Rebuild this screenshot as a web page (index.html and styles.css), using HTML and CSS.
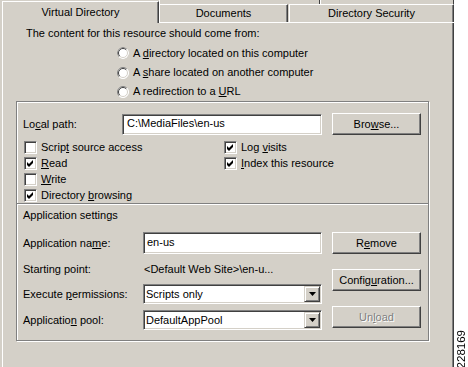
FILE: index.html
```html
<!DOCTYPE html>
<html lang="en">
<head>
    <meta charset="UTF-8">
    <meta name="viewport" content="width=device-width, initial-scale=1.0">
    <title>Virtual Directory Properties</title>
    <link rel="stylesheet" href="styles.css">
</head>
<body>
    <svg class="defs" width="0" height="0">
        <symbol id="radio" viewBox="0 0 12 12">
            <circle cx="6" cy="6" r="5.5" fill="#fff"/>
            <path d="M2.1 9.9 A5.5 5.5 0 0 1 9.9 2.1" fill="none" stroke="#808080"/>
            <path d="M2.8 9.2 A4.5 4.5 0 0 1 9.2 2.8" fill="none" stroke="#404040"/>
            <path d="M9.9 2.1 A5.5 5.5 0 0 1 2.1 9.9" fill="none" stroke="#fff"/>
            <path d="M9.2 2.8 A4.5 4.5 0 0 1 2.8 9.2" fill="none" stroke="#d4d0c8"/>
        </symbol>
        <symbol id="tick" viewBox="0 0 11 11">
            <path d="M2 4 L4 6 L8 2 L8 5 L4 9 L2 7 Z" fill="#000"/>
        </symbol>
        <symbol id="arrow" viewBox="0 0 7 4">
            <path d="M0 0 H7 L3.5 4 Z" fill="#000"/>
        </symbol>
    </svg>

    <div class="page">
        <div class="window">
            <div class="tabs">
                <div class="tab active">Virtual Directory</div>
                <div class="back">
                    <div class="backrow"><span class="stub first"></span><span class="stub"></span></div>
                    <div class="row">
                        <div class="tab docs">Documents</div>
                        <div class="tab security">Directory Security</div>
                    </div>
                </div>
            </div>

            <div class="panel">
                <p class="intro">The content for this resource should come from:</p>
                <div class="radios">
                    <div class="radio"><svg class="rb on"><use href="#radio"/></svg><span>A <u>d</u>irectory located on this computer</span></div>
                    <div class="radio"><svg class="rb"><use href="#radio"/></svg><span>A <u>s</u>hare located on another computer</span></div>
                    <div class="radio"><svg class="rb"><use href="#radio"/></svg><span>A redirection to a <u>U</u>RL</span></div>
                </div>

                <div class="group">
                    <div class="top">
                        <div class="path-row">
                            <span class="label">Lo<u>c</u>al path:</span>
                            <div class="field path">C:\MediaFiles\en-us</div>
                            <button class="btn">Bro<u>w</u>se...</button>
                        </div>
                        <div class="checks">
                            <div class="check"><span class="box"></span><span>Scrip<u>t</u> source access</span></div>
                            <div class="check"><span class="box"><svg><use href="#tick"/></svg></span><span><u>R</u>ead</span></div>
                            <div class="check"><span class="box"></span><span><u>W</u>rite</span></div>
                            <div class="check"><span class="box"><svg><use href="#tick"/></svg></span><span>Directory <u>b</u>rowsing</span></div>
                            <div class="check"><span class="box"><svg><use href="#tick"/></svg></span><span>Log <u>v</u>isits</span></div>
                            <div class="check"><span class="box"><svg><use href="#tick"/></svg></span><span><u>I</u>ndex this resource</span></div>
                        </div>
                    </div>

                    <div class="sep"></div>

                    <div class="app">
                        <div class="app-title">Application settings</div>
                        <div class="app-body">
                            <div class="app-grid">
                                <span>Application na<u>m</u>e:</span>
                                <div class="field">en-us</div>
                                <span>Starting point:</span>
                                <span class="value">&lt;Default Web Site&gt;\en-u...</span>
                                <span>Execute <u>p</u>ermissions:</span>
                                <div class="field select"><span>Scripts only</span><span class="drop"><svg><use href="#arrow"/></svg></span></div>
                                <span>Applicatio<u>n</u> pool:</span>
                                <div class="field select"><span>DefaultAppPool</span><span class="drop"><svg><use href="#arrow"/></svg></span></div>
                            </div>
                            <div class="app-btns">
                                <button class="btn">R<u>e</u>move</button>
                                <button class="btn">Config<u>u</u>ration...</button>
                                <button class="btn off">Un<u>l</u>oad</button>
                            </div>
                        </div>
                    </div>
                </div>
            </div>
        </div>
        <div class="side"><span class="fig">228169</span></div>
    </div>
</body>
</html>
```

FILE: styles.css
```css
body {
    margin: 0;
    background: #fff;
    font-family: "Liberation Sans", Arial, sans-serif;
    font-size: 11px;
    line-height: 13px;
    color: #000;
}
.defs {
    display: none;
}
.page {
    display: flex;
    height: 367px;
    overflow: hidden;
}
.window {
    width: 454px;
    box-sizing: border-box;
    padding-left: 2px;
    background: #d4d0c8;
    display: flex;
    flex-direction: column;
}
.side {
    flex: 1;
    display: flex;
    align-items: flex-end;
    justify-content: center;
}
.fig {
    writing-mode: vertical-rl;
    transform: rotate(180deg);
    font-size: 11.5px;
    line-height: 12px;
    margin-bottom: -1px;
}

/* tabs */
.tabs {
    display: flex;
    height: 23px;
}
.tab {
    box-sizing: border-box;
    text-align: center;
    border-top: 1px solid #fff;
    border-left: 1px solid #fff;
    border-right: 1px solid #404040;
    box-shadow: inset -1px 0 #808080;
}
.tab.active {
    width: 157px;
    height: 22px;
    margin-top: 1px;
    line-height: 21px;
}
.back {
    flex: 1;
    display: flex;
    flex-direction: column;
}
.backrow {
    height: 4px;
    display: flex;
}
.stub {
    box-sizing: border-box;
    width: 134px;
    border-left: 1px solid #fff;
    border-right: 1px solid #404040;
}
.stub.first {
    width: 161px;
}
.row {
    display: flex;
    height: 19px;
    box-sizing: border-box;
    border-bottom: 1px solid #fff;
}
.row .tab {
    height: 18px;
    line-height: 17px;
}
.docs {
    width: 129px;
}
.security {
    width: 165px;
    margin-left: 1px;
}

/* panel */
.panel {
    flex: 1;
    border-left: 1px solid #fff;
    border-right: 1px solid #404040;
    box-shadow: inset -1px 0 #808080;
    padding: 4px 0 0 13px;
}
.intro {
    margin: 0 0 0 10px;
}
.radios {
    margin: 3px 0 0 101px;
    display: grid;
    grid-template-rows: 20px 19px 19px;
}
.radio {
    display: flex;
    align-items: center;
}
.rb {
    width: 12px;
    height: 12px;
    margin-right: 4px;
}
.rb.on {
    background: radial-gradient(circle at 6px 6px, #000 2px, transparent 2.5px);
    border-radius: 50%;
}

/* group box */
.group {
    width: 413px;
    box-sizing: border-box;
    border: 1px solid #808080;
    box-shadow: inset 1px 1px #fff, 1px 1px #fff;
}
.top {
    padding: 11px 0 0 6px;
}
.path-row {
    display: flex;
    align-items: center;
    height: 22px;
}
.path-row .label {
    width: 99px;
}
.field {
    box-sizing: border-box;
    height: 21px;
    line-height: 17px;
    padding-left: 3px;
    background: #fff;
    border-top: 1px solid #808080;
    border-left: 1px solid #808080;
    border-right: 1px solid #fff;
    border-bottom: 1px solid #fff;
    box-shadow: inset 1px 1px #404040, inset -1px -1px #d4d0c8;
    white-space: nowrap;
}
.field.path {
    width: 200px;
    padding-left: 4px;
}
.btn {
    box-sizing: border-box;
    width: 89px;
    height: 22px;
    padding: 0;
    margin: 0;
    font: inherit;
    color: #000;
    background: #d4d0c8;
    border-top: 1px solid #fff;
    border-left: 1px solid #fff;
    border-right: 1px solid #404040;
    border-bottom: 1px solid #404040;
    box-shadow: inset -1px -1px #808080;
}
.path-row .btn {
    margin-left: 10px;
}
.btn.off {
    color: #808080;
    text-shadow: 1px 1px #fff;
}
.checks {
    margin-top: 4px;
    padding-left: 1px;
    display: grid;
    grid-template-columns: 200px auto;
    grid-template-rows: repeat(4, 16px);
    grid-auto-flow: column;
}
.check {
    display: flex;
    align-items: center;
}
.box {
    box-sizing: border-box;
    width: 13px;
    height: 13px;
    margin-right: 4px;
    background: #fff;
    border-top: 1px solid #808080;
    border-left: 1px solid #808080;
    border-right: 1px solid #fff;
    border-bottom: 1px solid #fff;
    box-shadow: inset 1px 1px #404040, inset -1px -1px #d4d0c8;
}
.box svg {
    display: block;
    width: 11px;
    height: 11px;
}
.sep {
    height: 2px;
    box-sizing: border-box;
    border-top: 1px solid #808080;
    border-bottom: 1px solid #fff;
}

/* application settings */
.app {
    padding: 4px 0 10px 6px;
}
.app-body {
    display: flex;
    margin-top: 10px;
}
.app-grid {
    display: grid;
    grid-template-columns: 120px 179px;
    grid-template-rows: 22px 18px 20px 20px;
    row-gap: 6px;
    align-items: center;
}
.app-grid .field {
    height: 22px;
    line-height: 18px;
}
.app-grid .field.select {
    height: 20px;
    line-height: 16px;
    padding: 0 1px 0 2px;
    display: flex;
    align-items: center;
    justify-content: space-between;
}
.value {
    padding-left: 1px;
    white-space: nowrap;
}
.drop {
    box-sizing: border-box;
    width: 16px;
    height: 16px;
    background: #d4d0c8;
    border-top: 1px solid #d4d0c8;
    border-left: 1px solid #d4d0c8;
    border-right: 1px solid #404040;
    border-bottom: 1px solid #404040;
    box-shadow: inset 1px 1px #fff, inset -1px -1px #808080;
    display: flex;
    align-items: center;
    justify-content: center;
}
.drop svg {
    width: 7px;
    height: 4px;
}
.app-btns {
    display: flex;
    flex-direction: column;
    gap: 15px;
    margin-left: 10px;
}
```
